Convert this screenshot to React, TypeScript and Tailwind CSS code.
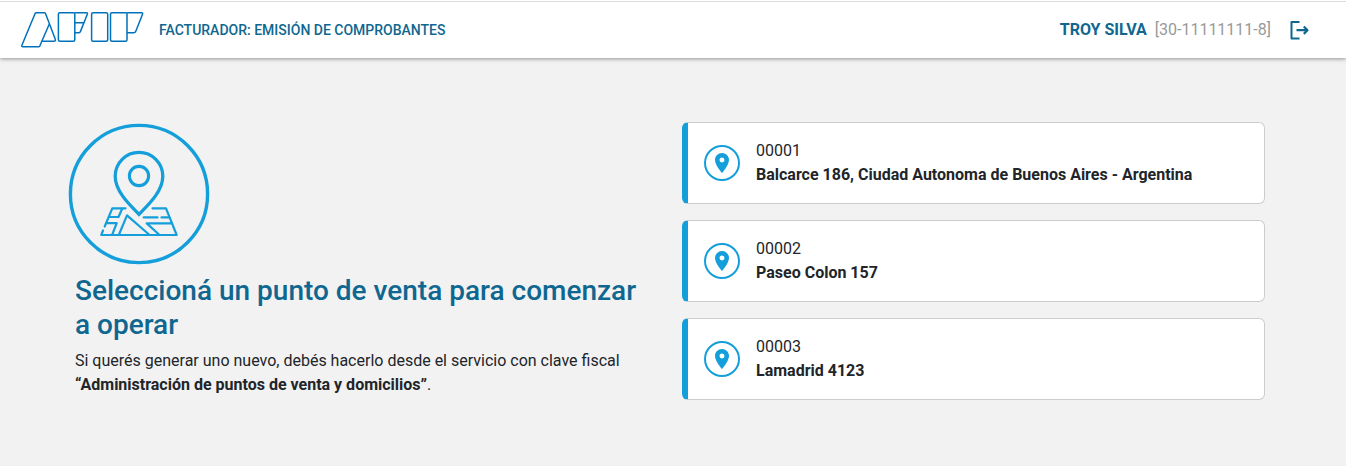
import React from 'react';
import { MdPlace } from 'react-icons/md';

interface SalesPoint {
  id: string;
  address: string;
}

const salesPoints: SalesPoint[] = [
  { id: '00001', address: 'Balcarce 186, Ciudad Autonoma de Buenos Aires - Argentina' },
  { id: '00002', address: 'Paseo Colon 157' },
  { id: '00003', address: 'Lamadrid 4123' }
];

const Logo: React.FC = () => (
  <svg
    width="125"
    height="40"
    viewBox="0 0 125 40"
    fill="none"
    stroke="#0072bb"
    strokeWidth="1.5"
    strokeLinejoin="round"
    role="img"
    aria-label="AFIP"
  >
    {/* A */}
    <path d="M29.3 14 19.9 35.8Q19.4 36.8 18.4 36.8H2.8Q1.3 36.8 1.9 35.3L15 3.7Q15.4 2.7 16.4 2.7H24.2Q25.2 2.7 25.6 3.7L35.3 29.2Q36 31.2 34 31.2H22.5" />
    {/* F */}
    <rect x="38.4" y="2.7" width="16.4" height="28.6" rx="1.5" />
    <path d="M54.8 2.7H66.4Q67.9 2.7 67.3 4.2L60.4 21.6Q60 22.7 59 22.7H54.8M54.8 12.8H63.8" />
    {/* I */}
    <rect x="71.6" y="2.7" width="16.1" height="28.6" rx="1.5" />
    {/* P */}
    <rect x="90.5" y="2.7" width="16.5" height="28.6" rx="1.5" />
    <path d="M107 2.7H121.6Q123.1 2.7 122.5 4.2L115.8 21.2Q115.2 22.7 113.7 22.7H107" />
  </svg>
);

const MapIcon: React.FC = () => (
  <svg
    width="148"
    height="148"
    viewBox="0 0 148 148"
    fill="none"
    stroke="#149fdb"
    strokeLinecap="round"
    strokeLinejoin="round"
    aria-hidden="true"
  >
    <circle cx="74" cy="74" r="68.6" strokeWidth="3.4" />
    <path
      d="M74 94.3C66 86 50.2 72 50.2 56.2A23.8 23.8 0 0 1 97.8 56.2C97.8 72 82 86 74 94.3Z"
      strokeWidth="3.3"
      strokeLinejoin="miter"
    />
    <circle cx="74" cy="56" r="9.6" strokeWidth="3.1" />
    <g strokeWidth="2.2">
      <path d="M39.7 106.5 47.3 88.3H60.5" />
      <path d="M87.5 88.3H101L111.7 115H36.3L38 110.5" />
      <path d="M44.3 97H53.5L57 89" />
      <path d="M41.7 103.2H51.7L47.3 114.5" />
      <path d="M54 114.5 62 95.3 84 114.5" />
      <path d="M78.7 97.4H92.5M96.5 97.4H104" />
      <path d="M106 103.4H81.7L94 114.5" />
    </g>
  </svg>
);

const LogoutIcon: React.FC = () => (
  <svg
    width="24"
    height="24"
    viewBox="0 0 24 24"
    fill="none"
    stroke="currentColor"
    strokeWidth="2"
    strokeLinejoin="round"
    aria-hidden="true"
  >
    <path d="M12.5 4H4.5V20.5H12.5" />
    <path d="M9.5 12.2H20.5M16.8 8.5 20.5 12.2 16.8 15.9" strokeWidth="2.2" />
  </svg>
);

const SalesPointCard: React.FC<{ point: SalesPoint }> = ({ point }) => (
  <button
    type="button"
    className="flex w-full items-center gap-4 rounded-md border border-l-[6px] border-[#ccc] border-l-[#149fdb] bg-white p-4 text-left hover:shadow-md"
  >
    <span className="flex h-9 w-9 shrink-0 items-center justify-center rounded-full border-2 border-[#149fdb] text-[#149fdb]">
      <MdPlace size={24} />
    </span>
    <span className="min-w-0">
      <span className="block">{point.id}</span>
      <span className="block font-bold">{point.address}</span>
    </span>
  </button>
);

export default function App() {
  return (
    <div className="min-h-screen bg-[#f2f2f2] font-['Roboto',sans-serif] text-base leading-6 text-[#212529]">
      {/* Header */}
      <header className="bg-white pt-px shadow-[0_1px_4px_rgba(0,0,0,0.4)]">
        <div className="flex h-[57px] items-center justify-between border-t border-[#dcdcdc] pr-[35px] pl-5">
          <div className="flex items-center gap-[14px]">
            <a href="#">
              <Logo />
            </a>
            <h1 className="text-sm font-medium text-[#0f6790]">
              FACTURADOR: EMISIÓN DE COMPROBANTES
            </h1>
          </div>
          <div className="flex items-center">
            <span className="font-bold text-[#0f6790]">TROY SILVA</span>
            <span className="ml-2 text-[#999]">[30-11111111-8]</span>
            <button type="button" aria-label="Salir" className="ml-4 text-[#0f6790]">
              <LogoutIcon />
            </button>
          </div>
        </div>
      </header>

      {/* Content */}
      <main className="mx-auto grid max-w-[1216px] grid-cols-1 pt-[62px] md:grid-cols-2">
        <section>
          <MapIcon />
          <div className="pt-[6px] pr-6 pl-[10px]">
            <h2 className="text-[28px] leading-[34px] font-medium text-[#0f6790]">
              Seleccioná un punto de venta para comenzar a operar
            </h2>
            <p className="mt-[7px]">
              Si querés generar uno nuevo, debés hacerlo desde el servicio con clave fiscal{' '}
              <strong className="font-bold">
                “Administración de puntos de venta y domicilios”
              </strong>
              .
            </p>
          </div>
        </section>

        <section className="flex flex-col gap-4 pt-[2px] pr-4 pl-[9px]">
          {salesPoints.map((point) => (
            <SalesPointCard key={point.id} point={point} />
          ))}
        </section>
      </main>
    </div>
  );
}
